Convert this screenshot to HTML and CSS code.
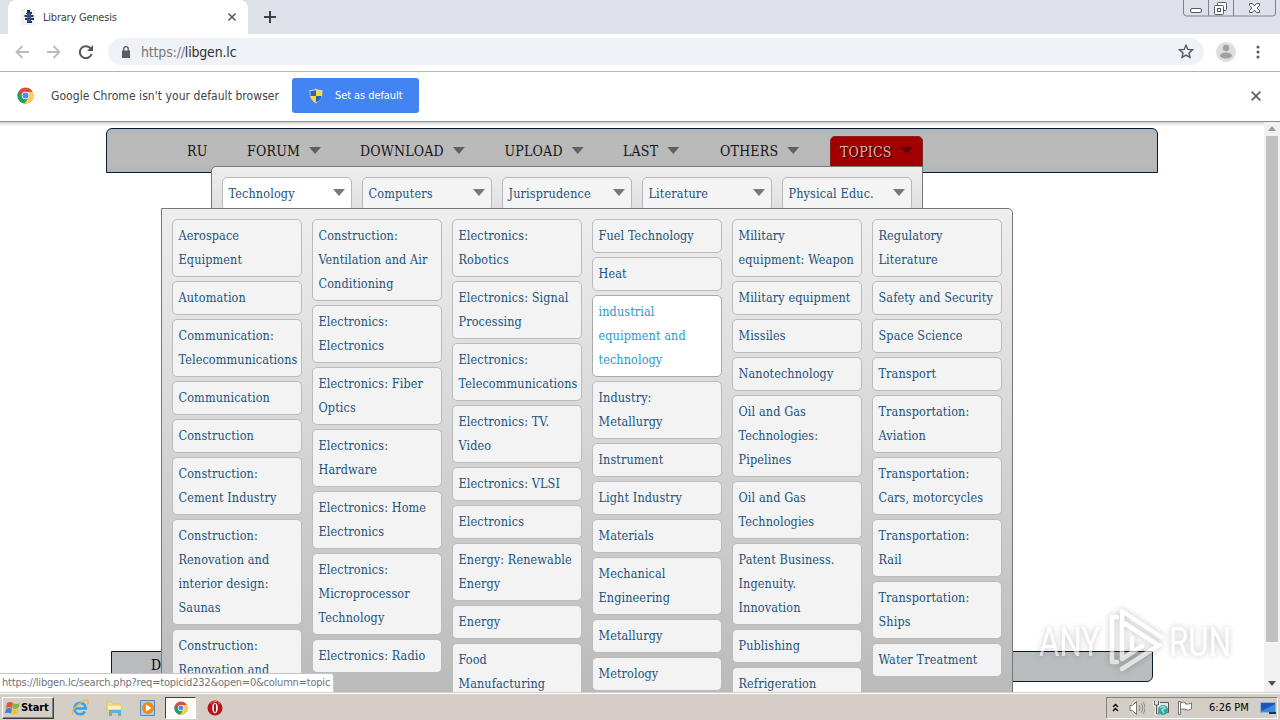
FILE: index.html
```html
<!DOCTYPE html>
<html lang="en">
<head>
<meta charset="utf-8">
<title>Library Genesis</title>
<link rel="stylesheet" href="styles.css">
</head>
<body>
<svg class="defs" width="0" height="0">
  <defs>
    <g id="chrome-logo">
      <circle cx="9" cy="9" r="8.500" fill="#dd4b3e"/>
      <path d="M1.600 4.800A8.500 8.500 0 0 0 8 17.450L12.500 11 9 9 5.500 11Z" fill="#1da362"/>
      <path d="M8 17.450A8.500 8.500 0 0 0 16.600 5.200H9L12.600 11Z" fill="#fdd04e"/>
      <circle cx="9" cy="9" r="4" fill="#fff"/>
      <circle cx="9" cy="9" r="3.200" fill="#4c8bf5"/>
    </g>
  </defs>
</svg>
<div class="screen">
  <header class="tabstrip">
    <div class="tab">
      <svg class="favicon" width="16" height="16" viewBox="0 0 16 16"><rect width="14" height="16" fill="#f1f3ea"/><path d="M6 1h3v2h2v2H5V4h1zM3.500 6h9v2h-9zM4 9h9v2H4zM6 12h5v2H6z" fill="#17306f"/><path d="M6 4h4v9H6z" fill="#3a5189"/></svg>
      <span class="tab-title">Library Genesis</span>
      <svg class="tab-close" width="10" height="10" viewBox="0 0 10 10"><path d="M1.500 1.500l7 7M8.500 1.500l-7 7" stroke="#5b5e62" stroke-width="1.700"/></svg>
    </div>
    <svg class="new-tab" width="12" height="12" viewBox="0 0 12 12"><path d="M6 0v12M0 6h12" stroke="#3c4043" stroke-width="2"/></svg>
    <svg class="win-buttons" width="94" height="17" viewBox="0 0 94 17" fill="none">
      <path d="M.5 0v13q0 3 3 3h86q3 0 3-3V0M25.500 0v16M50.500 0v16" stroke="#7c8089"/>
      <rect x="7.500" y="8.500" width="11" height="4" rx="1.500" fill="#fff" stroke="#555a66"/>
      <rect x="34.500" y="2.500" width="9" height="8" rx="1" fill="#fff" stroke="#555a66"/>
      <rect x="31.500" y="5.500" width="9" height="9" rx="1" fill="#fff" stroke="#555a66"/>
      <rect x="34.500" y="8.500" width="3" height="3" stroke="#555a66"/>
      <path d="M66.500 3.500h3l2 2.500 2-2.500h3v2l-2.500 2.500 2.500 2.500v2h-3l-2-2.500-2 2.500h-3v-2l2.500-2.500-2.500-2.500z" fill="#fff" stroke="#555a66"/>
    </svg>
  </header>

  <div class="toolbar">
    <svg class="nav-icon" width="14" height="14" viewBox="0 0 14 14"><path d="M14 7H1.500M7.500 1l-6 6 6 6" fill="none" stroke="#b9bbbe" stroke-width="1.800"/></svg>
    <svg class="nav-icon" width="14" height="14" viewBox="0 0 14 14"><path d="M0 7h12.500M6.500 1l6 6-6 6" fill="none" stroke="#b9bbbe" stroke-width="1.800"/></svg>
    <svg class="nav-icon" width="14" height="14" viewBox="0 0 14 14"><path d="M12 4A6 6 0 1 0 12.600 9" fill="none" stroke="#54575b" stroke-width="2"/><path d="M14 0v6H8z" fill="#54575b"/></svg>
    <div class="omnibox">
      <svg width="10" height="12" viewBox="0 0 10 12"><path d="M1 4.500h8V12H1z" fill="#5a5d61"/><path d="M2.700 5V3a2.300 2.300 0 0 1 4.600 0v2" fill="none" stroke="#5a5d61" stroke-width="1.300"/></svg>
      <span class="url"><span class="scheme">https://</span>libgen.lc</span>
      <svg class="star" width="16" height="15" viewBox="0 0 14 14"><path d="M7 1.200l1.700 3.900 4.300.4-3.200 2.800.9 4.200L7 10.300l-3.700 2.200.9-4.200L1 5.500l4.300-.4z" fill="none" stroke="#54575b" stroke-width="1.300"/></svg>
    </div>
    <svg class="avatar" width="20" height="20" viewBox="0 0 20 20"><circle cx="10" cy="10" r="10" fill="#dedede"/><circle cx="10" cy="6" r="3.200" fill="#a0a0a0"/><ellipse cx="10" cy="13.500" rx="6" ry="3" fill="#a0a0a0"/></svg>
    <svg class="kebab" width="4" height="14" viewBox="0 0 4 14" fill="#54575b"><circle cx="2" cy="2" r="1.500"/><circle cx="2" cy="7" r="1.500"/><circle cx="2" cy="12" r="1.500"/></svg>
  </div>

  <div class="infobar">
    <svg width="17" height="17" viewBox="0 0 18 18"><use href="#chrome-logo"/></svg>
    <span class="info-text">Google Chrome isn't your default browser</span>
    <button class="default-button">
      <svg width="14" height="16" viewBox="0 0 14 16"><path d="M7 .5q3 2 6.500 1.500Q14 12 7 15.500 0 12 .5 2 4 2.500 7 .5z" fill="#c6d4e4"/><path d="M7 2v6H1.500V3Q4.500 3.300 7 2z" fill="#2b66b8"/><path d="M7 2v6h5.500V3Q9.500 3.300 7 2z" fill="#ffd92e"/><path d="M7 8v6.500Q2 12 1.500 8z" fill="#ffd92e"/><path d="M7 8v6.500Q12 12 12.500 8z" fill="#2b66b8"/></svg>
      <span>Set as default</span>
    </button>
    <svg class="info-close" width="10" height="10" viewBox="0 0 10 10"><path d="M.7.7l8.600 8.600M9.300.7L.7 9.300" stroke="#606367" stroke-width="1.900"/></svg>
  </div>

  <main class="viewport">
    <nav class="menu">
      <span class="menu-item">RU</span>
      <span class="menu-item">FORUM<i class="arrow"></i></span>
      <span class="menu-item">DOWNLOAD<i class="arrow"></i></span>
      <span class="menu-item">UPLOAD<i class="arrow"></i></span>
      <span class="menu-item">LAST<i class="arrow"></i></span>
      <span class="menu-item">OTHERS<i class="arrow"></i></span>
      <span class="menu-item active">TOPICS<i class="arrow"></i></span>
    </nav>
    <div class="page-footer">D</div>
    <div class="topics">
      <a class="topic selected">Technology<i class="arrow"></i></a>
      <a class="topic">Computers<i class="arrow"></i></a>
      <a class="topic">Jurisprudence<i class="arrow"></i></a>
      <a class="topic">Literature<i class="arrow"></i></a>
      <a class="topic">Physical Educ.<i class="arrow"></i></a>
    </div>
    <div class="mega">
      <div class="col">
        <a>Aerospace<br>Equipment</a><a>Automation</a><a>Communication:<br>Telecommunications</a><a>Communication</a><a>Construction</a><a>Construction:<br>Cement Industry</a><a>Construction:<br>Renovation and<br>interior design:<br>Saunas</a><a>Construction:<br>Renovation and</a>
      </div>
      <div class="col">
        <a>Construction:<br>Ventilation and Air<br>Conditioning</a><a>Electronics:<br>Electronics</a><a>Electronics: Fiber<br>Optics</a><a>Electronics:<br>Hardware</a><a>Electronics: Home<br>Electronics</a><a>Electronics:<br>Microprocessor<br>Technology</a><a>Electronics: Radio</a>
      </div>
      <div class="col">
        <a>Electronics:<br>Robotics</a><a>Electronics: Signal<br>Processing</a><a>Electronics:<br>Telecommunications</a><a>Electronics: TV.<br>Video</a><a>Electronics: VLSI</a><a>Electronics</a><a>Energy: Renewable<br>Energy</a><a>Energy</a><a>Food<br>Manufacturing</a>
      </div>
      <div class="col">
        <a>Fuel Technology</a><a>Heat</a><a class="hover">industrial<br>equipment and<br>technology</a><a>Industry:<br>Metallurgy</a><a>Instrument</a><a>Light Industry</a><a>Materials</a><a>Mechanical<br>Engineering</a><a>Metallurgy</a><a>Metrology</a>
      </div>
      <div class="col">
        <a>Military<br>equipment: Weapon</a><a>Military equipment</a><a>Missiles</a><a>Nanotechnology</a><a>Oil and Gas<br>Technologies:<br>Pipelines</a><a>Oil and Gas<br>Technologies</a><a>Patent Business.<br>Ingenuity.<br>Innovation</a><a>Publishing</a><a>Refrigeration</a>
      </div>
      <div class="col">
        <a>Regulatory<br>Literature</a><a>Safety and Security</a><a>Space Science</a><a>Transport</a><a>Transportation:<br>Aviation</a><a>Transportation:<br>Cars, motorcycles</a><a>Transportation:<br>Rail</a><a>Transportation:<br>Ships</a><a>Water Treatment</a>
      </div>
    </div>
    <div class="scrollbar"><i class="up"></i><i class="thumb"></i><i class="down"></i></div>
    <div class="status">https://libgen.lc/search.php?req=topicid232&amp;open=0&amp;column=topic</div>
  </main>

  <footer class="taskbar">
    <div class="start">
      <svg width="16" height="16" viewBox="0 0 16 16"><path d="M2 3q3-2 6 0L7 8Q4 6.500 1 8z" fill="#e2572b"/><path d="M8.500 3.300q3 1.500 6-.3L13.500 8q-3 1.500-6 .2z" fill="#7db63c"/><path d="M1 8.700q3-1.500 6 0L6 13.500Q3 12 0 13.500z" fill="#3c82d0"/><path d="M7.300 9q3 1.500 6-.3l-1 5q-3 1.500-6 .2z" fill="#f6c22c"/></svg>
      <b>Start</b>
    </div>
    <div class="quick"><svg width="18" height="18" viewBox="0 0 18 18"><path d="M14 12.500A5.700 5.700 0 1 1 14.800 9.500H5" fill="none" stroke="#35a3e3" stroke-width="2.600"/><path d="M2 16Q-1 12 8 5t9-2.500q1 1-1 3.500" fill="none" stroke="#e9bd3b" stroke-width="1.300"/></svg></div>
    <div class="quick"><svg width="18" height="18" viewBox="0 0 18 18"><path d="M2 3h5l1 2h8v10H2z" fill="#f2da83" stroke="#d8bf6c" stroke-width=".7"/><path d="M3 7h13v3H3z" fill="#fff3b8"/><path d="M4 17v-6h12v6h-3v-3H7v3z" fill="#62afd9"/></svg></div>
    <div class="quick"><svg width="18" height="18" viewBox="0 0 18 18"><path d="M1.500 1.500h14v15h-14z" fill="#a9cdea" stroke="#4f8cc3"/><circle cx="9" cy="9" r="6" fill="#f28a16"/><path d="M7 5.500l5.500 3.500L7 12.500z" fill="#fff"/></svg></div>
    <div class="quick pressed"><svg width="14" height="14" viewBox="0 0 18 18"><use href="#chrome-logo"/></svg></div>
    <div class="quick last"><svg width="16" height="16" viewBox="0 0 16 16"><circle cx="8" cy="8" r="7.500" fill="#bb1219"/><path d="M3 4Q8-1 13 4" fill="none" stroke="#e46d68"/><ellipse cx="8" cy="8" rx="2.800" ry="5.300" fill="#fff"/><ellipse cx="8" cy="8" rx="1.100" ry="4.400" fill="#b01016"/></svg></div>
    <div class="tray">
      <svg width="7" height="9" viewBox="0 0 7 9"><path d="M1 4l2.500-2.500L6 4M1 8l2.500-2.500L6 8" fill="none" stroke="#000" stroke-width="1.400"/></svg>
      <svg class="t-sound" width="16" height="16" viewBox="0 0 16 16"><path d="M1 5.500h2.500l4-4v13l-4-4H1z" fill="#fff" stroke="#777"/><path d="M10 5q2 3 0 6M12 3.500q3.500 4.500 0 9M14 2q4 6 0 12" fill="none" stroke="#888"/></svg>
      <svg class="t-net" width="16" height="16" viewBox="0 0 16 16"><path d="M4.500 2.500h11v10h-11z" fill="#dfe6ec" stroke="#555"/><path d="M1.500 1v4h4V1M3.500 5v9h4" fill="none" stroke="#fff" stroke-width="2.500"/><path d="M1.500 1v4h4V1M3.500 5v9h4" fill="none" stroke="#555"/><circle cx="10" cy="10" r="5" fill="#35a3a4"/><path d="M7 8q3-3 5 0l-3 2 2 3" stroke="#a5e3c0" fill="none" stroke-width="1.500"/></svg>
      <svg class="t-flag" width="16" height="16" viewBox="0 0 16 16"><path d="M1.500 1.500v13h2v-13zM3.500 2.500q3-1 5 .5v1q3 .5 6-1v6q-3 1.500-6 1V9H3.500z" fill="#fff" stroke="#777"/></svg>
      <span class="clock">6:26 PM</span>
      <svg class="t-desk" width="17" height="14" viewBox="0 0 17 14"><path d="M.5 1.500h15v10H.5z" fill="#1c58b8" stroke="#8cb4dc"/><path d="M1 10Q8 7 15 3v8H1z" fill="#3b8be0"/><path d="M9 11h7v2H9z" fill="#153267"/></svg>
    </div>
  </footer>

  <svg class="watermark" width="244" height="86" viewBox="-10 -10 244 86">
    <g class="mark-text"><text x="1" y="49" textLength="61" lengthAdjust="spacingAndGlyphs">ANY</text><text x="131" y="49" textLength="62" lengthAdjust="spacingAndGlyphs">RUN</text></g>
    <g class="mark-lines"><path d="M79 10h-5v45h5"/><path d="M123 30L84 4v48M86 16l31 20M94 31v11M84 62l37-24M84 52l20-13"/></g>
  </svg>
</div>
</body>
</html>
```
FILE: styles.css
```css
* { box-sizing: border-box; }
body { margin: 0; font-family: "DejaVu Sans Condensed", "DejaVu Sans", sans-serif; font-stretch: condensed; }
svg { display: block; flex: none; }
.defs { position: absolute; }
.screen { position: relative; width: 1280px; height: 720px; overflow: hidden; display: flex; flex-direction: column; background: #fff; }

.tabstrip { height: 34px; flex: none; display: flex; background: #dee1e8; }
.tab { width: 240px; margin-left: 8px; padding-left: 13px; display: flex; align-items: center; background: #fff; border-radius: 8px 8px 0 0; }
.tab-title { width: 75px; margin: 0 auto 0 6px; font-size: 11px; letter-spacing: -.22px; color: #404347; white-space: nowrap; }
.tab-close { margin-right: 11px; }
.new-tab { margin: 11px 0 0 16px; }
.win-buttons { margin-left: auto; margin-right: 3px; }

.toolbar { height: 38px; flex: none; display: flex; align-items: center; padding: 0 20px 2px 15px; border-bottom: 1px solid #b4b5b8; }
.nav-icon { margin-right: 18px; }
.omnibox { width: 1096px; height: 27px; margin-left: -3px; padding: 0 10px 0 13px; display: flex; align-items: center; border-radius: 14px; background: #eff2f6; }
.url { margin: 0 auto 0 10px; font-size: 14px; letter-spacing: -.17px; color: #303134; }
.scheme { color: #75797d; }
.avatar { margin-left: 12px; }
.kebab { margin-left: auto; }

.infobar { height: 50px; flex: none; display: flex; align-items: center; padding: 0 19px 2px 17px; border-bottom: 1px solid #8e8e8e; }
.info-text { width: 229px; margin-left: 17px; font-size: 12px; letter-spacing: .06px; color: #404347; white-space: nowrap; }
.default-button { width: 127px; height: 35px; margin-left: 12px; padding: 0 0 0 17px; display: flex; align-items: center; gap: 12px; border: 0; border-radius: 3px; background: #4384f3; color: #fff; font: inherit; font-size: 11px; letter-spacing: -.08px; white-space: nowrap; }
.info-close { margin-left: auto; }

.viewport { position: relative; height: 570px; flex: none; overflow: hidden; background: linear-gradient(#cfcfcf, #fff 4px); font-family: "DejaVu Serif Condensed", "DejaVu Serif", serif; font-stretch: condensed; }
.menu { width: 1052px; height: 45px; margin: 6px 0 0 106px; padding: 7px 0 0 80px; display: grid; grid-template-columns: 60px 113px 144.500px 118.500px 97px 110px 93px; border: 1px solid #071c2f; border-radius: 6px 6px 0 0; background: linear-gradient(#acb8c0, #b9b9b9 8px, #bababa 34px, #b1b6ba); }
.menu-item { height: 31px; padding-bottom: 2px; display: flex; align-items: center; font-size: 14px; letter-spacing: .2px; color: #151515; }
.arrow { width: 12px; height: 7px; margin-left: 9px; background: #606060; clip-path: polygon(0 0, 100% 0, 50% 100%); }
.menu-item.active { padding: 0 0 0 9px; border: 1px solid #8a2020; border-radius: 5px 5px 0 0; background: #a20000; color: #d0bbaa; text-shadow: 1px 1px 1px #000; }
.active .arrow { margin-top: -2px; background: #5c0000; }
.page-footer { width: 1042px; height: 31px; margin: 478px 0 0 111px; padding: 3px 0 0 39px; border: 1px solid #071c2f; border-radius: 0 0 6px 6px; background: #b9bbbc; font-size: 14px; line-height: 20px; }

.topics { position: absolute; left: 211px; top: 44px; width: 712px; height: 43px; padding: 10px 10px 0; display: flex; gap: 10px; border: 1px solid #777; border-radius: 5px 0 0; background: linear-gradient(#eee, #e0e0e0); }
.topic { width: 130px; height: 34px; padding: 0 6px 0 5.500px; display: flex; justify-content: space-between; border: 1px solid #b5b9bb; border-radius: 5px; background: #f4f4f4; font-size: 12.500px; letter-spacing: .15px; line-height: 31px; color: #1a527c; white-space: nowrap; }
.topic.selected { background: #fff; }
.topic .arrow { margin-top: 11px; background: #777; }
.mega { position: absolute; left: 161px; top: 86px; width: 852px; height: 590px; padding: 10px; display: flex; gap: 10px; border: 1px solid #777; border-radius: 0 5px 5px; background: linear-gradient(#eee, #bbb 480px); }
.col { width: 130px; flex: none; display: flex; flex-direction: column; gap: 4px; }
.col a { padding: 4px 5.500px; border: 1px solid #b9bcbe; border-radius: 5px; background: #f3f3f3; font-size: 12.500px; letter-spacing: .12px; line-height: 24px; color: #1a527c; white-space: nowrap; }
.col a.hover { background: #fff; color: #1f9cc8; border-color: #aaa; }

.scrollbar { position: absolute; right: 0; top: 0; width: 16px; height: 570px; padding: 4px 2px 6px; display: flex; flex-direction: column; align-items: center; background: #f1f1f1; }
.up { width: 8px; height: 5px; background: #999; clip-path: polygon(50% 0, 100% 100%, 0 100%); }
.thumb { width: 12px; height: 506px; margin-top: 5px; background: #c1c1c1; }
.down { width: 8px; height: 5px; margin-top: auto; background: #505050; clip-path: polygon(0 0, 100% 0, 50% 100%); }
.status { position: absolute; left: 0; bottom: 0; width: 334px; height: 19px; padding-left: 2px; border: solid #c3c5c8; border-width: 1px 1px 0 0; border-radius: 0 3px 0 0; background: #fff; font: 11px/18px "DejaVu Sans Condensed", "DejaVu Sans", sans-serif; font-stretch: condensed; letter-spacing: -.21px; color: #707377; white-space: nowrap; }

.taskbar { height: 28px; flex: none; display: flex; align-items: center; padding: 2px 2px 0; border-top: 1px solid #d4d0c8; box-shadow: inset 0 1px #fff; background: #d4cec7; }
.start { width: 52px; height: 22px; margin-right: 10px; padding-left: 2px; display: flex; align-items: center; border: 1px solid; border-color: #fff #404040 #404040 #fff; box-shadow: inset -1px -1px #808080; font-size: 11px; letter-spacing: -.1px; }
.quick { width: 31px; height: 22px; margin-right: 3px; display: flex; align-items: center; justify-content: center; }
.pressed { margin-left: -1px; border: 1px solid; border-color: #404040 #fff #fff #404040; background: #fbfaf9; }
.tray { width: 172px; height: 22px; margin-left: auto; padding-left: 5px; display: flex; align-items: center; border: 1px solid; border-color: #808080 #fff #fff #808080; }
.t-sound { margin-left: 10px; }
.t-net, .t-flag { margin-left: 8px; }
.clock { width: 40px; margin-left: 16px; font-size: 11px; white-space: nowrap; }
.t-desk { margin-left: 11px; }

.watermark { position: absolute; left: 1028px; top: 597px; filter: drop-shadow(0 0 3px rgba(0, 0, 0, .4)); opacity: .6; }
.mark-text { font: 40px Roboto, "Liberation Sans", sans-serif; fill: #fff; }
.mark-lines { fill: none; stroke: #fff; stroke-width: 4.500; stroke-linejoin: round; stroke-linecap: round; }
```
